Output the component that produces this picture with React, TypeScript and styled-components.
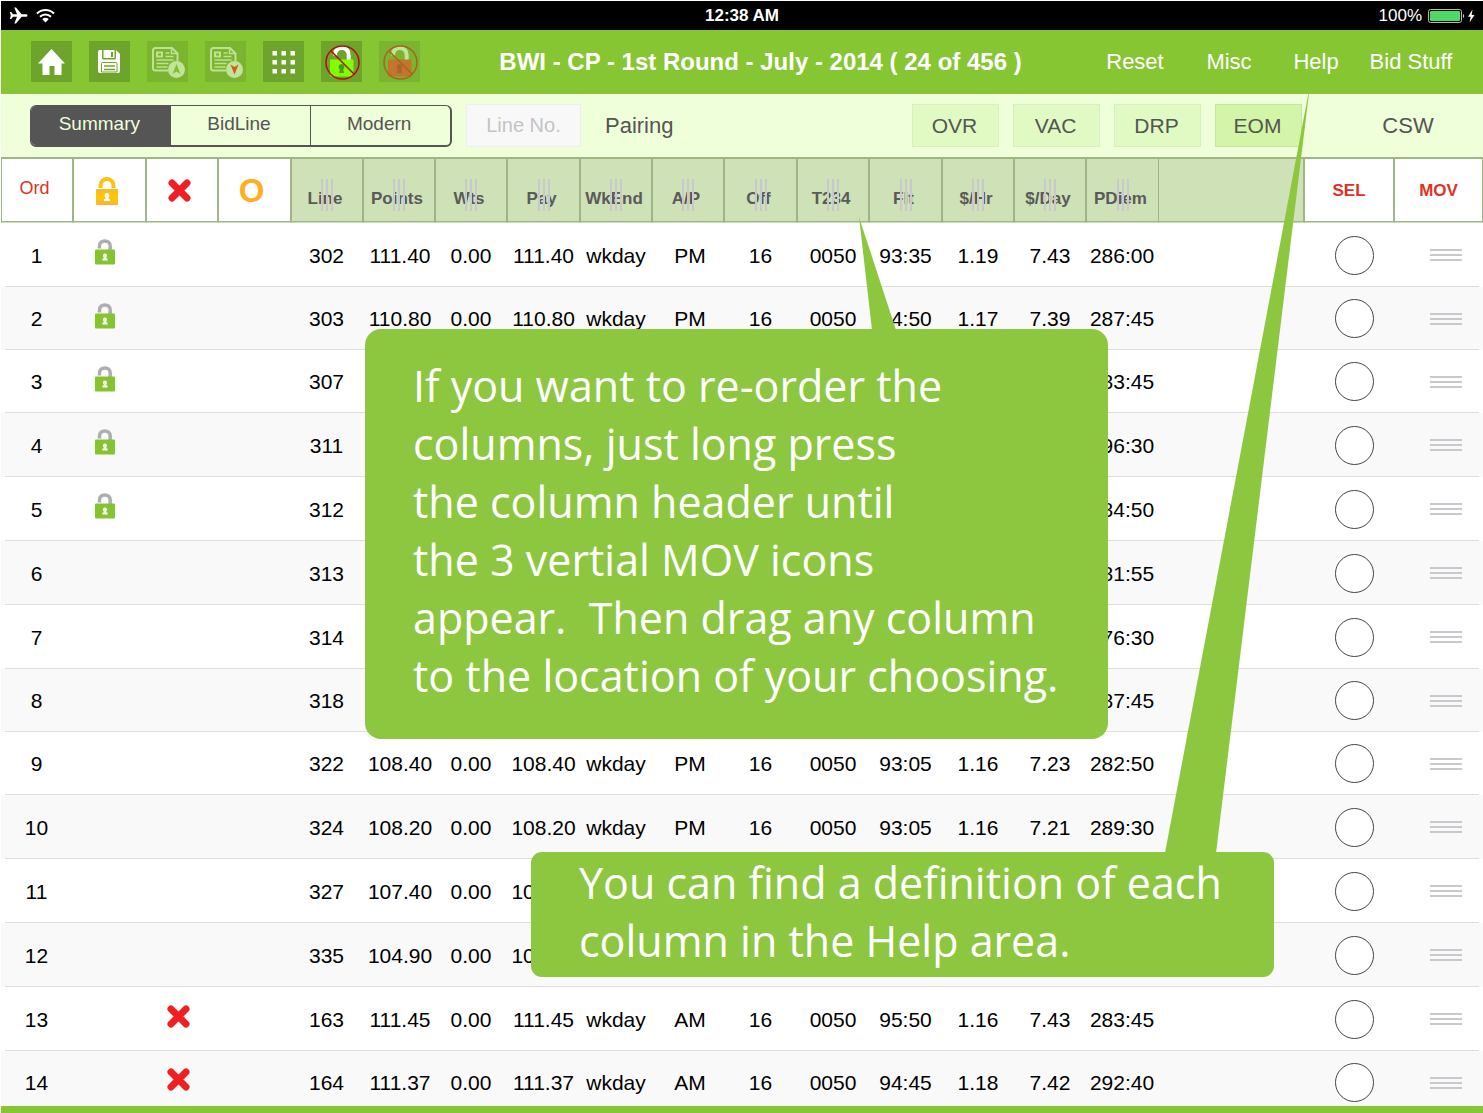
import React from "react";
import styled, { createGlobalStyle, css } from "styled-components";

const GlobalStyle = createGlobalStyle`
  *, *::before, *::after { box-sizing: border-box; }
  body { margin: 0; background: #fff; }
  button, input { font: inherit; color: inherit; margin: 0; padding: 0; }
  button { background: none; border: 0; cursor: pointer; }
`;

const green = "#87c633";
const rule = "#a0b584";
const ink = "#555";

const Screen = styled.div`
  position: relative;
  display: flex;
  flex-direction: column;
  height: 100vh;
  min-width: 1400px;
  padding: 1px 0 0 1px;
  overflow: hidden;
  font-family: "Liberation Sans", Arial, sans-serif;
  color: #000;
`;

const StatusBar = styled.div`
  display: grid;
  grid-template-columns: 1fr auto 1fr;
  align-items: center;
  flex: none;
  height: 29px;
  padding: 0 8px;
  background: #000;
  color: #fff;
  font-size: 17px;
`;

const StatusGroup = styled.div<{ $end?: boolean }>`
  display: flex;
  align-items: center;
  gap: ${(p) => (p.$end ? 5 : 8)}px;
  justify-content: ${(p) => (p.$end ? "flex-end" : "flex-start")};
`;

const Clock = styled.time`
  font-weight: bold;
`;

const Header = styled.header`
  display: flex;
  align-items: center;
  flex: none;
  height: 64px;
  padding: 0 22px 0 30px;
  background: ${green};
  border-bottom: 1px solid #8fbe52;
  color: #fff;
`;

const Toolbar = styled.div`
  display: flex;
  gap: 17px;
`;

const ToolButton = styled.button<{ $dim?: boolean }>`
  display: block;
  width: 41px;
  height: 41px;
  background: ${(p) => (p.$dim ? "#7bb52f" : "#6fa42c")};
  svg { display: block; }
`;

const Title = styled.h1`
  flex: 1;
  margin: 0;
  padding-left: 18px;
  font-size: 24px;
  font-weight: bold;
  text-align: center;
  white-space: nowrap;
`;

const Nav = styled.nav`
  display: grid;
  grid-template-columns: 104px 84px 90px 100px;
`;

const NavButton = styled.button`
  font-size: 22px;
  white-space: nowrap;
`;

const FilterBar = styled.div`
  display: flex;
  align-items: center;
  flex: none;
  height: 63px;
  padding-left: 29px;
  background: #efffd9;
  color: ${ink};
`;

const Segments = styled.div`
  display: grid;
  grid-template-columns: repeat(3, 1fr);
  width: 422px;
  height: 42px;
  border: 2px solid ${ink};
  border-width: 1px 2px 2px 1px;
  border-radius: 6px;
  overflow: hidden;
`;

const Segment = styled.button<{ $active?: boolean }>`
  font-size: 19px;
  padding: 0 3px 2px 0;
  background: ${(p) => (p.$active ? ink : "transparent")};
  color: ${(p) => (p.$active ? "#efffd9" : ink)};
  & + & + & { border-left: 1px solid ${ink}; }
`;

const LineInput = styled.input`
  width: 115px;
  height: 43px;
  margin: 0 24px 0 14px;
  border: 1px solid #eeeff0;
  background: #f8f8f8;
  font-size: 20px;
  text-align: center;
  outline: none;
  &::placeholder { color: #c3c3c9; opacity: 1; }
`;

const PlainButton = styled.button`
  font-size: 22px;
`;

const FlagGroup = styled.div`
  display: flex;
  gap: 14px;
  margin-left: auto;
`;

const Flag = styled.button<{ $on?: boolean }>`
  width: 87px;
  height: 43px;
  padding-right: 2px;
  border: 1px solid ${(p) => (p.$on ? "#c5e79d" : "#d8f0ba")};
  background: ${(p) => (p.$on ? "#d2f5a8" : "#e1fac3")};
  font-size: 21px;
`;

const SwitchButton = styled.button`
  width: 150px;
  margin-left: 31px;
  font-size: 22px;
`;

const TableArea = styled.main`
  flex: 1;
  min-height: 0;
  overflow: hidden;
`;

const Table = styled.table`
  width: 100%;
  table-layout: fixed;
  border-collapse: separate;
  border-spacing: 0;
`;

const Col = styled.col<{ $w?: number }>`
  ${(p) => p.$w && css`width: ${p.$w}px;`}
`;

const HeadCell = styled.th<{ $tinted?: boolean; $thin?: boolean }>`
  position: relative;
  height: 66px;
  padding: 0;
  border: solid ${rule};
  border-width: 2px ${(p) => (p.$thin ? 1 : 2)}px 0 0;
  border-bottom: 1px solid #cddcb9;
  box-shadow: inset 0 -1px 0 ${rule};
  background: ${(p) => (p.$tinted ? "#cfe1b7" : "#fff")};
  &:first-child { border-left-width: 1px; }
  &:last-child { border-right-width: 1px; }
`;

const SortButton = styled.button<{ $tone: "red" | "redBold" | "orange" | "grey" }>`
  display: flex;
  align-items: center;
  justify-content: center;
  width: 100%;
  height: 62px;
  white-space: nowrap;
  ${(p) => p.$tone === "red" && css`color: #e0321f; font-size: 18px; font-weight: normal; padding: 0 5px 4px 0;`}
  ${(p) => p.$tone === "redBold" && css`color: #e0321f; font-size: 17px; font-weight: bold;`}
  ${(p) => p.$tone === "orange" && css`color: #ffae1f; font-size: 33px; font-weight: bold; padding-right: 6px;`}
  ${(p) => p.$tone === "grey" && css`color: #5a5a5a; font-size: 17px; font-weight: bold; padding: 17px 4px 0 0;`}
`;

const ColumnGrip = styled.span`
  position: absolute;
  left: 0;
  right: 0;
  top: 20px;
  display: flex;
  justify-content: center;
  gap: 3px;
  pointer-events: none;
  i { width: 2px; height: 32px; background: #c9c8cd; }
`;

const Row = styled.tr`
  height: 64px;
  background: linear-gradient(#dedede, #dedede) center bottom / calc(100% - 8px) 1px no-repeat #fff;
  &:nth-child(even) { background-color: #f9f9f9; }
  &:nth-child(6n + 2), &:nth-child(6n + 3) { height: 63px; }
`;

const Cell = styled.td<{ $before?: number; $after?: number; $lift?: boolean }>`
  padding: ${(p) => (p.$lift ? "0" : "1px")} ${(p) => p.$after ?? 2}px ${(p) => (p.$lift ? "6px" : "0")} ${(p) => p.$before ?? 0}px;
  font-size: 21px;
  text-align: center;
  vertical-align: middle;
  white-space: nowrap;
  svg { display: block; margin: 0 auto; }
`;

const SelectCell = styled(Cell)`
  padding: 0 2px 0 10px;
`;

const GripCell = styled(Cell)`
  padding: 0 0 0 14px;
`;

const Select = styled.input`
  appearance: none;
  display: block;
  width: 39px;
  height: 39px;
  margin: 0 auto;
  border: 1px solid #444;
  border-radius: 50%;
  background: #fff;
`;

const RowGrip = styled.button`
  display: grid;
  gap: 3px;
  margin: 0 auto;
  i { width: 32px; height: 2px; background: #c9c8cd; }
`;

const BottomBar = styled.footer`
  flex: none;
  height: 7px;
  background: ${green};
`;

const Callout = styled.aside<{ $x: number; $y: number; $h: number; $r: number }>`
  position: absolute;
  left: ${(p) => p.$x}px;
  top: ${(p) => p.$y}px;
  width: 743px;
  height: ${(p) => p.$h}px;
  padding-left: 48px;
  display: flex;
  align-items: center;
  border-radius: ${(p) => p.$r}px;
  background: #8dc73f;
`;

const CalloutText = styled.p`
  margin: 0;
  padding-bottom: 6px;
  color: #fff;
  font-family: "Open Sans", "Noto Sans", sans-serif;
  font-size: 43px;
  line-height: 58px;
  white-space: pre;
`;

const Tail = styled.svg<{ $x: number }>`
  position: absolute;
  left: ${(p) => p.$x}px;
  bottom: calc(100% - 1px);
  pointer-events: none;
`;

const PlaneIcon = () => (
  <svg width="19" height="17" viewBox="0 0 19 17" fill="#fff" aria-hidden="true">
    <path d="M18.500 8.500c0-.8-.7-1.300-1.600-1.300h-4.300L7 .5H5.300l2.700 6.700H4L2.200 5H.9l.9 3.500L.9 12h1.300L4 9.800h4l-2.700 6.700H7l5.600-6.700h4.300c.9 0 1.600-.5 1.600-1.300z" />
  </svg>
);

const WifiIcon = () => (
  <svg width="19" height="15" viewBox="0 0 19 15" fill="none" stroke="#fff" strokeWidth="2" aria-hidden="true">
    <path d="M1 5.500a12 12 0 0 1 17 0" />
    <path d="M4 8.700a7.800 7.800 0 0 1 11 0" />
    <path d="M9.500 14.500 6.300 11.200a4.500 4.500 0 0 1 6.400 0z" fill="#fff" stroke="none" />
  </svg>
);

const BatteryIcon = () => (
  <svg width="48" height="16" viewBox="0 0 48 16" aria-hidden="true">
    <rect x="1.500" y="1.500" width="33" height="13" rx="2" fill="none" stroke="#b9b9b9" />
    <rect x="3" y="3" width="30" height="10" rx="1" fill="#4cd964" />
    <path d="M36 6c1.200.3 1.200 3.700 0 4z" fill="#fff" />
    <path d="M45.500 1.500 41 8.800h2.700L42.500 14.500 47.500 7h-2.900z" fill="#fff" />
  </svg>
);

const HomeIcon = () => (
  <svg width="41" height="41" viewBox="0 0 41 41" fill="#fff" aria-hidden="true">
    <path d="M20.500 8 34 22.500h-3.500v11.500h-7v-9h-5v9h-7V22.500H7z" />
  </svg>
);

const SaveIcon = () => (
  <svg width="41" height="41" viewBox="0 0 41 41" aria-hidden="true">
    <path d="M11 9h16l4 4v17a2 2 0 0 1-2 2H11a2 2 0 0 1-2-2V11a2 2 0 0 1 2-2z" fill="#fff" />
    <path d="M13 9v8a1.500 1.500 0 0 0 1.500 1.500h11A1.500 1.500 0 0 0 27 17V9h-1.500v8h-11V9z" fill="#6fa42c" />
    <path d="M22 11h2v5h-2z" fill="#6fa42c" />
    <path d="M12.500 31V22.500a1 1 0 0 1 1-1h13.500a1 1 0 0 1 1 1V31z" fill="#fff" stroke="#6fa42c" />
    <path d="M15 25h11M15 28.500h11" stroke="#6fa42c" strokeWidth="1.500" />
  </svg>
);

const BidSheetIcon = ({ down }: { down?: boolean }) => (
  <svg width="41" height="41" viewBox="0 0 41 41" fill="none" stroke="#bfe196" aria-hidden="true">
    <path d="M21 29.500H8.500A2.500 2.500 0 0 1 6 27V9.500A2.500 2.500 0 0 1 8.500 7H25l5.500 5.500V20" strokeWidth="2" />
    <path d="M24.500 7.500v5h5.500" strokeWidth="1.500" />
    <path d="M10 11.500h5v4h-5z" strokeWidth="2" />
    <path d="M18.500 12h4M18.500 15.500h8M9.500 19h17M9.500 22.500h12M9.500 26h11" strokeWidth="1.500" />
    <circle cx="29.500" cy="28.500" r="8.500" fill="#c1e39a" stroke="none" />
    {down ? (
      <path d="M25.500 23.500 29.500 26l4-2.500-4 10z" fill="#cf5a1c" stroke="none" />
    ) : (
      <path d="M29.500 23 33.500 33l-4-2.500-4 2.500z" fill="#7cc22c" stroke="none" />
    )}
  </svg>
);

const GridIcon = () => (
  <svg width="41" height="41" viewBox="0 0 41 41" fill="#fff" aria-hidden="true">
    {[10, 19, 28].map((y) => [9.5, 18.5, 27.5].map((x) => <rect key={`${x}-${y}`} x={x} y={y} width="4.500" height="4.500" />))}
  </svg>
);

const NoLockIcon = ({ dim }: { dim?: boolean }) => {
  const shackle = dim ? "#c1e39a" : "#fff";
  const body = dim ? "#c4742d" : "#80ff00";
  const hole = dim ? "#a3682a" : "#4d9a10";
  const ring = dim ? "#a9641f" : "#b40d0d";
  return (
    <svg width="41" height="41" viewBox="0 0 41 41" aria-hidden="true">
      <path d="M14 14.500C14 8.500 17 7 20.700 7s7 1.500 7 7.500V19" fill="none" stroke={shackle} strokeWidth="4" />
      <rect x="9" y="18.500" width="23.500" height="17" rx="1" fill={body} />
      <path d="M20.500 23a3 3 0 0 1 1.700 5.400l.8 3.600h-5l.8-3.600A3 3 0 0 1 20.500 23z" fill={hole} />
      <circle cx="21.500" cy="21.500" r="16.500" fill="none" stroke={ring} strokeWidth="1.500" />
      <path d="M9.800 9.800 33.200 33.200" stroke={ring} strokeWidth="1.500" />
    </svg>
  );
};

const GoldLockIcon = () => (
  <svg width="24" height="28" viewBox="0 0 24 28" aria-hidden="true">
    <defs>
      <linearGradient id="gold" x1="0" y1="0" x2="0" y2="1">
        <stop offset="0" stopColor="#fbb62a" />
        <stop offset=".55" stopColor="#ffc800" />
        <stop offset="1" stopColor="#fbb03b" />
      </linearGradient>
    </defs>
    <path d="M5.500 11V8.500a6.500 6.500 0 0 1 13 0V11" fill="none" stroke="#ffc012" strokeWidth="4" />
    <rect x="1" y="12" width="22" height="16" rx="1" fill="url(#gold)" />
    <path d="M12 16a2.500 2.500 0 0 1 1.500 4.500V22H15v2H9v-2h1.500v-1.500A2.500 2.500 0 0 1 12 16z" fill="#fff" />
  </svg>
);

const OpenLockIcon = () => (
  <svg width="20" height="26" viewBox="0 0 20 26" role="img" aria-label="Locked line">
    <path d="M4.500 9.500V7C4.500 3.500 7 2 9.800 2s5.400 1.500 5.400 5V11" fill="none" stroke="#aeaeae" strokeWidth="3.500" />
    <rect x="0" y="10.500" width="20" height="15" rx="1" fill="#84c52f" />
    <path d="M10 14.500a2.100 2.100 0 0 1 1.300 3.700V19.500H12.500v2h-5v-2h1.200v-1.300A2.100 2.100 0 0 1 10 14.500z" fill="#fff" />
  </svg>
);

const CrossIcon = ({ label }: { label?: string }) => (
  <svg width="23" height="23" viewBox="0 0 23 23" role="img" aria-label={label}>
    <path d="M4 4 19 19M19 4 4 19" stroke="#ee2024" strokeWidth="7" strokeLinecap="round" />
  </svg>
);

const dataColumns: [string, number][] = [
  ["Line", 72], ["Points", 72], ["Wts", 72], ["Pay", 73], ["WkEnd", 72], ["A/P", 72],
  ["Off", 73], ["T234", 72], ["Flt", 73], ["$/Hr", 72], ["$/Day", 72], ["PDiem", 72],
];

type BidLine = {
  line: string;
  mark?: "lock" | "cross";
  points?: string;
  wts?: string;
  wkEnd?: string;
  shift?: string;
  off?: string;
  t234?: string;
  flt?: string;
  perHour?: string;
  perDay?: string;
  diem?: string;
};

const common = { wts: "0.00", wkEnd: "wkday", off: "16", t234: "0050" };

const rows: BidLine[] = [
  { ...common, line: "302", mark: "lock", points: "111.40", shift: "PM", flt: "93:35", perHour: "1.19", perDay: "7.43", diem: "286:00" },
  { ...common, line: "303", mark: "lock", points: "110.80", shift: "PM", flt: "94:50", perHour: "1.17", perDay: "7.39", diem: "287:45" },
  { line: "307", mark: "lock", diem: "283:45" },
  { line: "311", mark: "lock", diem: "296:30" },
  { line: "312", mark: "lock", diem: "284:50" },
  { line: "313", diem: "281:55" },
  { line: "314", diem: "276:30" },
  { line: "318", diem: "287:45" },
  { ...common, line: "322", points: "108.40", shift: "PM", flt: "93:05", perHour: "1.16", perDay: "7.23", diem: "282:50" },
  { ...common, line: "324", points: "108.20", shift: "PM", flt: "93:05", perHour: "1.16", perDay: "7.21", diem: "289:30" },
  { line: "327", points: "107.40", wts: "0.00" },
  { line: "335", points: "104.90", wts: "0.00" },
  { ...common, line: "163", mark: "cross", points: "111.45", shift: "AM", flt: "95:50", perHour: "1.16", perDay: "7.43", diem: "283:45" },
  { ...common, line: "164", mark: "cross", points: "111.37", shift: "AM", flt: "94:45", perHour: "1.18", perDay: "7.42", diem: "292:40" },
];

const Bars = () => (<><i /><i /><i /></>);

export default function App() {
  return (
    <Screen>
      <GlobalStyle />
      <StatusBar>
        <StatusGroup><PlaneIcon /><WifiIcon /></StatusGroup>
        <Clock>12:38 AM</Clock>
        <StatusGroup $end><span>100%</span><BatteryIcon /></StatusGroup>
      </StatusBar>

      <Header>
        <Toolbar>
          <ToolButton aria-label="Home"><HomeIcon /></ToolButton>
          <ToolButton aria-label="Save"><SaveIcon /></ToolButton>
          <ToolButton $dim aria-label="Move bids up"><BidSheetIcon /></ToolButton>
          <ToolButton $dim aria-label="Move bids down"><BidSheetIcon down /></ToolButton>
          <ToolButton aria-label="Grid"><GridIcon /></ToolButton>
          <ToolButton aria-label="Clear top locks"><NoLockIcon /></ToolButton>
          <ToolButton $dim aria-label="Clear bottom locks"><NoLockIcon dim /></ToolButton>
        </Toolbar>
        <Title>BWI - CP - 1st Round - July - 2014 ( 24 of 456 )</Title>
        <Nav>
          <NavButton>Reset</NavButton>
          <NavButton>Misc</NavButton>
          <NavButton>Help</NavButton>
          <NavButton>Bid Stuff</NavButton>
        </Nav>
      </Header>

      <FilterBar>
        <Segments>
          <Segment $active>Summary</Segment>
          <Segment>BidLine</Segment>
          <Segment>Modern</Segment>
        </Segments>
        <LineInput aria-label="Line number" placeholder="Line No." />
        <PlainButton>Pairing</PlainButton>
        <FlagGroup>
          <Flag>OVR</Flag>
          <Flag>VAC</Flag>
          <Flag>DRP</Flag>
          <Flag $on>EOM</Flag>
        </FlagGroup>
        <SwitchButton>CSW</SwitchButton>
      </FilterBar>

      <TableArea>
        <Table>
          <colgroup>
            <Col $w={73} /><Col $w={73} /><Col $w={72} /><Col $w={73} />
            {dataColumns.map(([name, w]) => <Col key={name} $w={w} />)}
            <Col /><Col $w={90} /><Col $w={88} />
          </colgroup>
          <thead>
            <tr>
              <HeadCell><SortButton $tone="red">Ord</SortButton></HeadCell>
              <HeadCell><SortButton $tone="orange" aria-label="Locked"><GoldLockIcon /></SortButton></HeadCell>
              <HeadCell><SortButton $tone="orange" aria-label="Rejected"><CrossIcon /></SortButton></HeadCell>
              <HeadCell><SortButton $tone="orange">O</SortButton></HeadCell>
              {dataColumns.map(([name]) => (
                <HeadCell key={name} $tinted $thin={name === "PDiem"}>
                  <SortButton $tone="grey">{name}</SortButton>
                  <ColumnGrip><Bars /></ColumnGrip>
                </HeadCell>
              ))}
              <HeadCell $tinted />
              <HeadCell><SortButton $tone="redBold">SEL</SortButton></HeadCell>
              <HeadCell><SortButton $tone="redBold">MOV</SortButton></HeadCell>
            </tr>
          </thead>
          <tbody>
            {rows.map((row, i) => (
              <Row key={row.line}>
                <Cell>{i + 1}</Cell>
                <Cell $lift $after={11}>{row.mark === "lock" && <OpenLockIcon />}</Cell>
                <Cell $lift $after={10}>{row.mark === "cross" && <CrossIcon label="Rejected line" />}</Cell>
                <Cell />
                <Cell $after={3}>{row.line}</Cell>
                <Cell $after={0}>{row.points}</Cell>
                <Cell>{row.wts}</Cell>
                <Cell>{row.points}</Cell>
                <Cell>{row.wkEnd}</Cell>
                <Cell $before={4}>{row.shift}</Cell>
                <Cell>{row.off}</Cell>
                <Cell>{row.t234}</Cell>
                <Cell>{row.flt}</Cell>
                <Cell>{row.perHour}</Cell>
                <Cell>{row.perDay}</Cell>
                <Cell>{row.diem}</Cell>
                <Cell />
                <SelectCell><Select type="checkbox" aria-label={`Select line ${row.line}`} /></SelectCell>
                <GripCell><RowGrip aria-label={`Move line ${row.line}`}><Bars /></RowGrip></GripCell>
              </Row>
            ))}
          </tbody>
        </Table>
      </TableArea>
      <BottomBar />

      <Callout $x={365} $y={329} $h={410} $r={16}>
        <Tail $x={494} width="38" height="113" viewBox="0 0 38 113" aria-hidden="true">
          <path d="M0 0 13 113H37z" fill="#8dc73f" />
        </Tail>
        <CalloutText>{"If you want to re-order the\ncolumns, just long press\nthe column header until\nthe 3 vertial MOV icons\nappear.  Then drag any column\nto the location of your choosing."}</CalloutText>
      </Callout>
      <Callout $x={531} $y={852} $h={125} $r={11}>
        <Tail $x={634} width="146" height="768" viewBox="0 0 146 768" aria-hidden="true">
          <path d="M145 0 0 768H51z" fill="#8dc73f" />
        </Tail>
        <CalloutText>{"You can find a definition of each\ncolumn in the Help area."}</CalloutText>
      </Callout>
    </Screen>
  );
}
